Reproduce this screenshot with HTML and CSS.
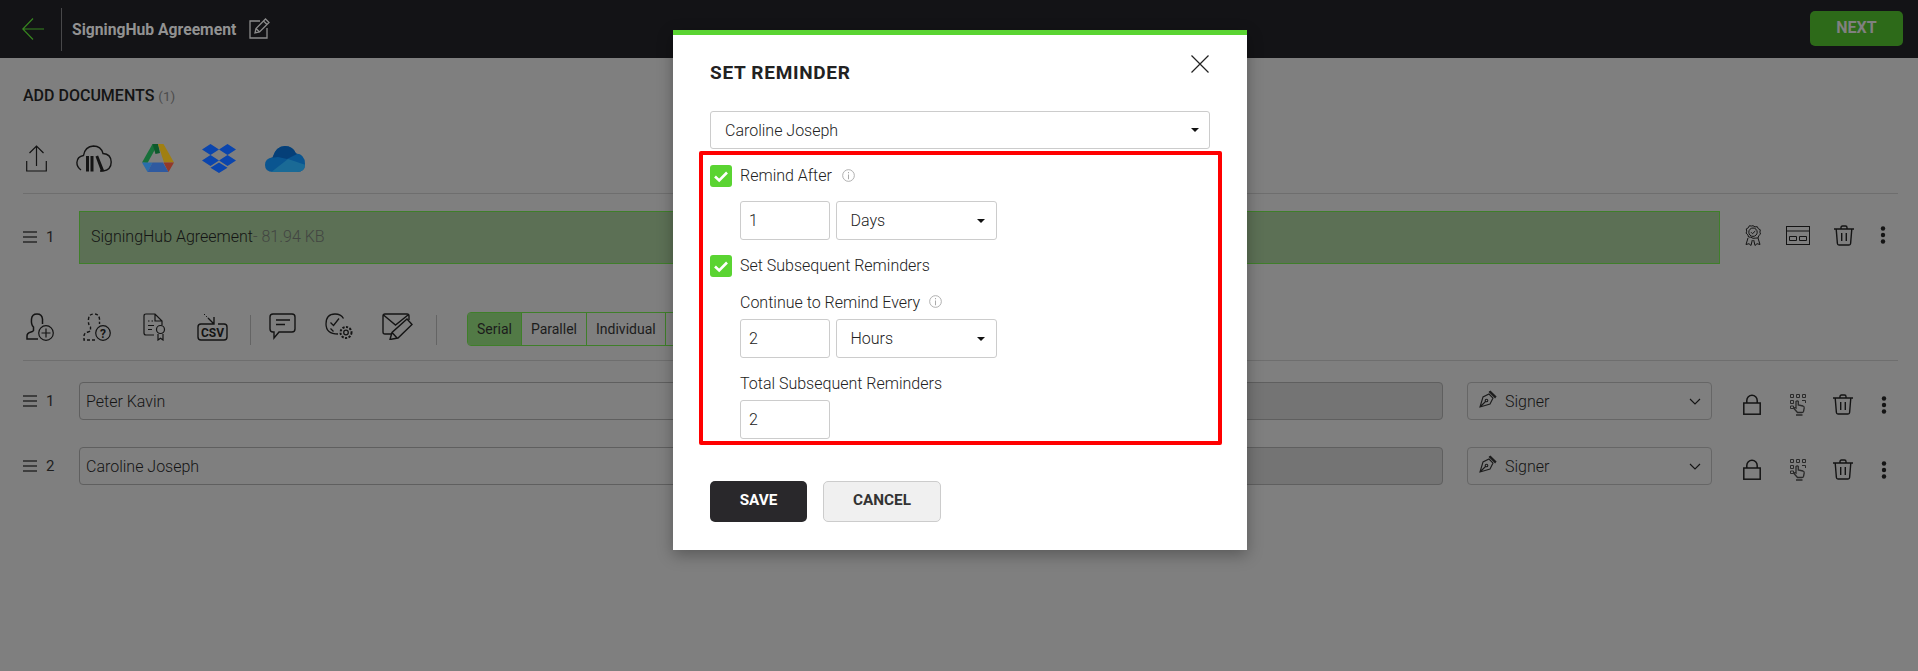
FILE: index.html
```html
<!DOCTYPE html>
<html lang="en">
<head>
  <meta charset="UTF-8">
  <title>Set Reminder</title>
  <link rel="stylesheet" href="styles.css">
</head>
<body>
  <svg class="defs" width="0" height="0">
    <symbol id="i-menu" viewBox="0 0 14 12"><path d="M0 1h14M0 6h14M0 11h14" fill="none" stroke="currentColor" stroke-width="1.3"/></symbol>
    <symbol id="i-trash" viewBox="0 0 20 21"><g fill="none" stroke="currentColor" stroke-width="1.4"><path d="M0 4h20M7 4V2.6Q7 1 8.5 1h3Q13 1 13 2.6V4M2.2 4l1.2 14.5Q3.5 20 5 20h10q1.500 0 1.600-1.500L17.800 4M7.700 8v8M12.300 8v8"/></g></symbol>
    <symbol id="i-dots" viewBox="0 0 8 18"><circle cx="4" cy="2.500" r="2.200" fill="currentColor"/><circle cx="4" cy="9" r="2.200" fill="currentColor"/><circle cx="4" cy="15.500" r="2.200" fill="currentColor"/></symbol>
    <symbol id="i-lock" viewBox="0 0 18 21"><g fill="none" stroke="currentColor" stroke-width="1.500"><rect x=".8" y="9" width="16.400" height="11.200"/><path d="M3.800 9V6.500a5.200 5.200 0 0 1 10.400 0V9"/></g></symbol>
    <symbol id="i-key" viewBox="0 0 16 22"><g fill="none" stroke="currentColor" stroke-width="1"><path d="M.5.500h3v3h-3zM6.500.500h3v3h-3zM12.500.500h3v3h-3zM.5 6.500h3v3h-3zM.5 12h3v2.500h-3zM12 6.500h3.500v2.500"/><path stroke-width="1.300" d="M6 14V7.500q1.300-1.300 2.300 0V11l4.700 1q1.500.5 1.200 2l-.7 3.500q-.3 1-1.500 1H7.500L4 14.500q.5-1.500 2-.5zM6 21h6.500"/></g></symbol>
    <symbol id="i-pen" viewBox="0 0 18 18"><g fill="none" stroke="currentColor" stroke-width="1.100"><path d="M1 17l3-10 6-3 4 4-3 6zM1 17l5.500-5.500M10 1.500l6.500 6.500M11 .8l6.200 6.200"/><circle cx="7.500" cy="10.500" r="1.300"/></g></symbol>
    <symbol id="i-info" viewBox="0 0 14 14"><circle cx="7" cy="7" r="6.300" fill="none" stroke="#aaa" stroke-width="1"/><path d="M7 6v5M7 3.200v1.300" stroke="#aaa" stroke-width="1.100"/></symbol>
    <symbol id="i-check" viewBox="0 0 22 22"><rect width="22" height="22" rx="3" fill="#5ad432"/><path d="M5 11.500l4.200 4L17 7.500" fill="none" stroke="#fff" stroke-width="2.600"/></symbol>
    <clipPath id="od-clip"><path d="M8 27Q0 27 0 20 0 13 7.500 12.500 11 1 20 1q8 0 11 7.500 9 .5 9 10.500 0 8-8 8z"/></clipPath>
  </svg>

  <!-- Top bar -->
  <header class="topbar">
    <svg class="back" width="22" height="22" viewBox="0 0 22 22"><path d="M22 11H1M11 .5L.8 11 11 21.500" fill="none" stroke="#37851f" stroke-width="1.200"/></svg>
    <span class="topbar-sep"></span>
    <span class="doc-title">SigningHub Agreement</span>
    <svg class="edit" width="21" height="21" viewBox="0 0 21 21"><g fill="none" stroke="#8c8c8c" stroke-width="1.300"><path d="M11 3H1v17h17V10"/><path d="M6 15l1-4.500L16.500 1l3.500 3.500L10.500 14zM7 10.500l3.500 3.500M14.500 3l3.500 3.500"/></g></svg>
    <button class="next-btn">NEXT</button>
  </header>

  <main class="page">
    <h2 class="section-title">ADD DOCUMENTS <span class="count">(1)</span></h2>

    <div class="sources">
      <svg class="src-upload" width="21" height="27" viewBox="0 0 21 27"><path d="M10.500 21V1M3.500 8l7-7 7 7M.7 16v10h19.600V16" fill="none" stroke="#141414" stroke-width="1.200"/></svg>
      <svg class="src-cloud" width="36" height="27" viewBox="0 0 36 27"><g fill="none" stroke="#141414" stroke-width="1.400"><path d="M5 25Q.8 22 .9 17.500 1.200 11.500 7.500 10.500 9 1.500 17.500 1q7.500 0 9.500 7.500 8 .5 8.200 8.500 0 8-8.200 9h-3"/></g><path d="M10 11h3v15.500h-3zM14.500 11h3v15.500h-3zM19.500 11.500l2.600-1 6 15-3 1z" fill="#141414"/></svg>
      <svg class="src-drive" width="32" height="28" viewBox="0 0 32 28">
        <path d="M10.500 0h5.500L5.500 19 0 18.500z" fill="#17703a"/>
        <path d="M10.500 0H16l2 9-4.500 1z" fill="#0d5a2c"/>
        <path d="M16 0h5.500L32 18.500h-10z" fill="#a07f12"/>
        <path d="M0 18.500h10.500L5.500 28z" fill="#2a6dab"/>
        <path d="M5.500 28l5-9.500H21L26.500 28z" fill="#2f5aa0"/>
        <path d="M21.500 18.500H32L26.500 28z" fill="#93392a"/>
      </svg>
      <svg class="src-dropbox" width="34" height="29" viewBox="0 0 34 29" fill="#0b45ad"><path d="M8.500 0L17 5.500 8.500 11 0 5.500zM25.500 0L34 5.500 25.500 11 17 5.500zM8.500 11L17 16.500 8.500 22 0 16.500zM25.500 11L34 16.500 25.500 22 17 16.500zM17 18.500l8.500 5.300L17 29l-8.500-5.200z"/></svg>
      <svg class="src-onedrive" width="40" height="27" viewBox="0 0 40 27">
        <g clip-path="url(#od-clip)">
          <rect width="40" height="27" fill="#0a5590"/>
          <path d="M5 13L12 0h20v9L22 14l-9-2z" fill="#053f78"/>
          <path d="M5 28l18-14 18 6v8z" fill="#1a6a96"/>
        </g>
      </svg>
    </div>

    <div class="row doc-row">
      <div class="handle"><svg class="menu"><use href="#i-menu"/></svg><span>1</span></div>
      <div class="doc-box">SigningHub Agreement<span class="doc-size">- 81.94 KB</span></div>
      <div class="actions doc-actions">
        <svg width="16" height="21" viewBox="0 0 16 21"><g fill="none" stroke="#141414" stroke-width="1"><path d="M8 .7l2 1.200 2.300-.2 1 2 2 1.100-.4 2.300.6 2-1.800 1.600-.6 2.200-2.300.2L8 13.300l-2.200-1.100-2.300-.2-.6-2.200L1.100 8.200l.6-2-.4-2.300 2-1.100 1-2 2.300.2z"/><circle cx="8" cy="7.200" r="4.200"/><path d="M6 7.200l1.500 1.500L10.300 6M3 13l-2 6.500 3-.8 2 1.800 1.300-5.500M13 13l2 6.500-3-.8-2 1.800-1.300-5.500"/></g></svg>
        <svg width="24" height="19" viewBox="0 0 24 19"><g fill="none" stroke="#141414" stroke-width="1"><rect x=".5" y=".5" width="23" height="18"/><path d="M.5 5h23"/><path d="M3.500 10.500h7v4h-7zM13.500 10.500h7v4h-7z"/></g></svg>
        <svg class="trash"><use href="#i-trash"/></svg>
        <svg class="dots"><use href="#i-dots"/></svg>
      </div>
    </div>

    <div class="toolbar">
      <svg class="t-add" width="28" height="28" viewBox="0 0 28 28"><g fill="none" stroke="#141414" stroke-width="1.500"><path d="M12 26H1v-3q0-3 4-4 2-.5 2.500-1.500V14Q5 12 5.500 6 6 1 11 1t5.500 5v5"/><circle cx="20" cy="20" r="7.300" stroke-width="1.200"/><path d="M20 15.500v9M15.500 20h9" stroke-width="1.200"/></g></svg>
      <svg class="t-ask" width="28" height="28" viewBox="0 0 28 28"><g fill="none" stroke="#141414" stroke-width="1.400"><path stroke-dasharray="3 2" d="M12 27H1v-4q0-3 4-4 2-.5 2.500-1.500V14Q5 12 5.500 6 6 1 11 1t5.500 5v5"/><circle cx="20" cy="20" r="7.300" stroke-width="1.200"/></g><text class="icon-text" x="20" y="24.500">?</text></svg>
      <svg class="t-doc" width="23" height="28" viewBox="0 0 23 28"><g fill="none" stroke="#141414" stroke-width="1.200"><path d="M11 22H3q-2 0-2-2V3q0-2 2-2h9l7 7v4M12 1v7h7"/><path d="M5 8h1.500M8.500 8H10M5 12.500h6M5 16.500h4" stroke-width="1.100"/><circle cx="17.500" cy="16.500" r="4"/><path d="M15 21v6l2.500-1.700L20 27v-6"/></g></svg>
      <svg class="t-csv" width="31" height="28" viewBox="0 0 31 28"><g fill="none" stroke="#141414" stroke-width="1.400"><path d="M10 11H4q-3 0-3 3v10q0 3 3 3h23q3 0 3-3V14q0-3-3-3h-6"/><path d="M7 1l4 4" stroke-dasharray="1.500 1.500" stroke-width="1"/><path d="M11 5l6 6M17 4v7h-7"/></g><text class="icon-text" x="15.500" y="24">CSV</text></svg>
      <span class="tool-sep sep-one"></span>
      <svg class="t-chat" width="27" height="27" viewBox="0 0 27 27"><g fill="none" stroke="#141414" stroke-width="1.400"><path d="M4 1h19q3 0 3 3v12q0 3-3 3H10l-5 6v-6H4q-3 0-3-3V4q0-3 3-3z"/><path d="M7 7h14M7 11.500h9"/></g></svg>
      <svg class="t-gear" width="28" height="27" viewBox="0 0 28 27"><g fill="none" stroke="#141414" stroke-width="1.300"><path d="M13 21Q1 21 1 11 1 1 10 1q6 0 8.500 4.500"/><path d="M5.500 9.500l3 3L14 5.500M5.500 15.500l3 3"/><circle cx="21" cy="19.500" r="2.300"/><circle cx="21" cy="19.500" r="5.500" stroke-dasharray="2.200 1.400" stroke-width="2"/></g></svg>
      <svg class="t-mail" width="33" height="27" viewBox="0 0 33 27"><g fill="none" stroke="#141414" stroke-width="1.400"><path d="M10 21H3q-2 0-2-2V3q0-2 2-2h22q2 0 2 2v4M1.500 2l12 10L26 2"/><path d="M8 26.500l2-7L25 6l5 5.500L16 25zM10 19.500l5.500 6"/></g></svg>
      <span class="tool-sep sep-two"></span>
      <div class="segments">
        <span class="seg seg-active">Serial</span>
        <span class="seg">Parallel</span>
        <span class="seg">Individual</span>
        <span class="seg">Custom</span>
      </div>
    </div>

    <div class="row person-row first">
      <div class="handle"><svg class="menu"><use href="#i-menu"/></svg><span>1</span></div>
      <div class="field name-field">Peter Kavin</div>
      <div class="field mail-field"></div>
      <div class="role"><svg class="pen"><use href="#i-pen"/></svg>Signer<svg class="chevron" width="12" height="7" viewBox="0 0 12 7"><path d="M1 1l5 5 5-5" fill="none" stroke="#141414" stroke-width="1.100"/></svg></div>
      <div class="actions person-actions">
        <svg class="lock"><use href="#i-lock"/></svg>
        <svg class="key"><use href="#i-key"/></svg>
        <svg class="trash"><use href="#i-trash"/></svg>
        <svg class="dots"><use href="#i-dots"/></svg>
      </div>
    </div>
    <div class="row person-row">
      <div class="handle"><svg class="menu"><use href="#i-menu"/></svg><span>2</span></div>
      <div class="field name-field">Caroline Joseph</div>
      <div class="field mail-field"></div>
      <div class="role"><svg class="pen"><use href="#i-pen"/></svg>Signer<svg class="chevron" width="12" height="7" viewBox="0 0 12 7"><path d="M1 1l5 5 5-5" fill="none" stroke="#141414" stroke-width="1.100"/></svg></div>
      <div class="actions person-actions">
        <svg class="lock"><use href="#i-lock"/></svg>
        <svg class="key"><use href="#i-key"/></svg>
        <svg class="trash"><use href="#i-trash"/></svg>
        <svg class="dots"><use href="#i-dots"/></svg>
      </div>
    </div>
  </main>

  <!-- Modal -->
  <div class="modal">
    <div class="modal-head">
      <h3>SET REMINDER</h3>
      <svg class="close" width="18" height="18" viewBox="0 0 18 18"><path d="M.5.500l17 17M17.500.500l-17 17" fill="none" stroke="#222" stroke-width="1.200"/></svg>
    </div>
    <div class="select wide-select">Caroline Joseph<span class="caret"></span></div>

    <div class="highlight">
      <div class="check-row">
        <svg class="check"><use href="#i-check"/></svg>
        <span>Remind After</span>
        <svg class="info"><use href="#i-info"/></svg>
      </div>
      <div class="indent">
        <div class="inputs first-inputs">
          <div class="num">1</div>
          <div class="select unit">Days<span class="caret"></span></div>
        </div>
      </div>
      <div class="check-row second">
        <svg class="check"><use href="#i-check"/></svg>
        <span>Set Subsequent Reminders</span>
      </div>
      <div class="indent">
        <div class="label">Continue to Remind Every <svg class="info"><use href="#i-info"/></svg></div>
        <div class="inputs">
          <div class="num">2</div>
          <div class="select unit">Hours<span class="caret"></span></div>
        </div>
        <div class="label">Total Subsequent Reminders</div>
        <div class="inputs">
          <div class="num">2</div>
        </div>
      </div>
    </div>

    <div class="modal-foot">
      <button class="save-btn">SAVE</button>
      <button class="cancel-btn">CANCEL</button>
    </div>
  </div>
</body>
</html>
```

FILE: styles.css
```css
/* General Reset */
* {
  margin: 0;
  padding: 0;
  box-sizing: border-box;
}
html, body {
  height: 671px;
  overflow: hidden;
}
body {
  position: relative;
  font-family: Roboto, "Liberation Sans", sans-serif;
  font-size: 16px;
  font-weight: 300;
  color: #141414;
  background-color: #7f7f7f;
}
.defs {
  position: absolute;
}
svg {
  display: block;
  flex: none;
}

/* Top bar */
.topbar {
  display: flex;
  align-items: center;
  height: 58px;
  padding: 0 15px 0 22px;
  background-color: #131316;
}
.topbar-sep {
  width: 1px;
  height: 43px;
  margin-left: 17px;
  background-color: #48484a;
}
.doc-title {
  margin-left: 10px;
  font-size: 15.700px;
  font-weight: 700;
  color: #929292;
}
.edit {
  margin-left: 13px;
  margin-top: -1px;
}
.next-btn {
  margin-left: auto;
  width: 93px;
  height: 35px;
  margin-top: -1px;
  padding-bottom: 2px;
  border: none;
  border-radius: 5px;
  background-color: #2d6a19;
  color: #808080;
  font: 700 16px Roboto, sans-serif;
}

/* Page */
.page {
  padding: 28px 20px 0 23px;
}
.section-title {
  font-size: 16px;
  font-weight: 500;
  line-height: 20px;
  color: #141414;
}
.count {
  font-weight: 400;
  font-size: 13.500px;
  color: #4c4c4c;
}
.sources {
  display: flex;
  align-items: flex-end;
  height: 51px;
  margin-top: 37px;
  padding: 0 0 20px 3px;
  border-bottom: 1px solid #6e6e6e;
}
.src-cloud { margin-left: 29px; margin-bottom: 1px; }
.src-drive { margin-left: 30px; margin-bottom: 1px; }
.src-dropbox { margin-left: 28px; }
.src-onedrive { margin-left: 29px; margin-bottom: 1px; }
.src-upload { margin-bottom: 1px; }

.row {
  display: flex;
  align-items: center;
}
.handle {
  display: flex;
  align-items: center;
  gap: 9px;
  flex: none;
  width: 56px;
  font-size: 15px;
  font-weight: 400;
  color: #1e1e1e;
}
.menu {
  width: 14px;
  height: 12px;
  color: #2a2a2a;
}

.doc-row {
  height: 53px;
  margin-top: 17px;
}
.doc-row .handle {
  margin-top: -2px;
}
.doc-box {
  display: flex;
  align-items: center;
  width: 1641px;
  height: 53px;
  padding: 0 0 3px 11px;
  background-color: #5c7055;
  border: 1px solid #3f7f2a;
  color: #141414;
}
.doc-size {
  color: #424542;
}
.actions {
  display: flex;
  align-items: center;
}
.doc-actions {
  gap: 25px;
  padding-left: 25px;
  margin-top: -5px;
}
.trash {
  width: 20px;
  height: 21px;
  color: #141414;
}
.dots {
  width: 8px;
  height: 18px;
  color: #141414;
}
.doc-actions .trash {
  margin-left: -1px;
}

/* Toolbar */
.toolbar {
  display: flex;
  align-items: flex-start;
  height: 49px;
  margin-top: 48px;
  padding-left: 3px;
  border-bottom: 1px solid #6e6e6e;
}
.toolbar > svg {
  margin-top: 1px;
}
.t-add { margin-right: 29px; }
.t-ask { margin-right: 32px; }
.t-doc { margin-right: 31px; }
.t-csv { margin-right: 22px; }
.t-chat { margin-right: 29px; }
.t-gear { margin-right: 29px; }
.t-mail { margin-right: 21px; }
.tool-sep {
  width: 1px;
  height: 30px;
  margin-top: 3px;
  background-color: #646464;
}
.sep-one { margin-right: 18px; }
.sep-two { margin-right: 30px; }
.segments {
  display: flex;
  height: 34px;
  border: 1px solid #3f7f2a;
  border-radius: 4px;
  font-size: 14px;
  font-weight: 400;
  color: #1c1c1c;
}
.seg {
  display: flex;
  align-items: center;
  justify-content: center;
  padding: 0 9px;
  border-right: 1px solid #3f7f2a;
}
.seg:last-child {
  border-right: none;
}
.seg-active {
  background-color: #527a46;
}

/* Recipients */
.person-row {
  height: 38px;
  margin-top: 27px;
}
.person-row.first {
  margin-top: 21px;
}
.field {
  height: 38px;
  display: flex;
  align-items: center;
  padding: 1px 6px 0;
  border: 1px solid #5f5f5f;
  border-radius: 4px;
  color: #141414;
}
.name-field {
  width: 881px;
}
.mail-field {
  width: 473px;
  margin-left: 10px;
  background-color: #747474;
}
.role {
  display: flex;
  align-items: center;
  width: 245px;
  height: 38px;
  margin-left: 24px;
  padding: 1px 10px 0 11px;
  border: 1px solid #666;
  border-radius: 4px;
  color: #141414;
}
.pen {
  width: 18px;
  height: 18px;
  margin: -5px 8px 0 0;
  color: #1c1c1c;
}
.chevron {
  margin-left: auto;
}
.person-actions {
  padding-left: 31px;
  margin-top: 7px;
}
.lock {
  width: 18px;
  height: 21px;
  color: #141414;
}
.key {
  width: 16px;
  height: 22px;
  margin-left: 29px;
  color: #2a2a2a;
}
.person-actions .trash {
  margin-left: 27px;
}
.person-actions .dots {
  margin-left: 27px;
}

/* Modal */
.modal {
  position: absolute;
  left: 673px;
  top: 30px;
  width: 574px;
  padding: 0 37px 28px;
  font-weight: 300;
  background-color: #fff;
  border-top: 5px solid #5ad432;
  box-shadow: 0 5px 15px rgba(0, 0, 0, 0.3);
}
.modal-head {
  display: flex;
  justify-content: space-between;
  align-items: flex-start;
  padding-top: 20px;
  padding-right: 1px;
}
.modal-head h3 {
  margin-top: 8px;
  font-size: 19px;
  font-weight: 700;
  letter-spacing: 0.7px;
  line-height: 20px;
  color: #222;
}
.select {
  position: relative;
  display: flex;
  align-items: center;
  background-color: #fff;
  border: 1px solid #ccc;
  border-radius: 3px;
  color: #222;
}
.wide-select {
  width: 500px;
  height: 38px;
  margin-top: 28px;
  padding-left: 14px;
}
.wide-select .caret {
  right: 10px;
}
.caret {
  position: absolute;
  right: 11px;
  top: 50%;
  margin-top: -2px;
  border-top: 4px solid #111;
  border-left: 4px solid transparent;
  border-right: 4px solid transparent;
}
.highlight {
  margin: 2px -12px 0 -11px;
  padding: 10px 0 2px 7px;
  border: 4px solid #f00;
  border-radius: 2px;
}
.check-row {
  display: flex;
  align-items: center;
  height: 22px;
  color: #222;
}
.check-row span {
  margin-top: -2px;
}
.check-row.second {
  margin-top: 15px;
}
.check {
  width: 22px;
  height: 22px;
  margin-right: 8px;
}
.info {
  width: 13px;
  height: 13px;
  margin-left: 10px;
  margin-top: -2px;
}
.label .info {
  margin-left: 9px;
}
.indent {
  margin-left: 30px;
}
.label {
  display: flex;
  align-items: center;
  height: 20px;
  margin-top: 15px;
  color: #222;
}
.inputs {
  display: flex;
  gap: 5.500px;
  margin-top: 7px;
}
.first-inputs {
  margin-top: 14px;
}
.num {
  display: flex;
  align-items: center;
  width: 90px;
  height: 39px;
  padding-left: 8px;
  border: 1px solid #ccc;
  border-radius: 3px;
  font-weight: 300;
  color: #222;
}
.unit {
  width: 161.500px;
  height: 39px;
  padding-left: 14px;
}
.modal-foot {
  display: flex;
  gap: 16px;
  margin-top: 36px;
}
.modal-foot button {
  height: 41px;
  padding-bottom: 3px;
  border-radius: 5px;
  font: 700 15.300px Roboto, sans-serif;
}
.save-btn {
  width: 97px;
  border: none;
  background-color: #29282b;
  color: #fff;
}
.cancel-btn {
  width: 118px;
  border: 1px solid #ccc;
  background-color: #f0f0f0;
  color: #333;
}
.icon-text {
  font: 700 12px Roboto, sans-serif;
  fill: #141414;
  text-anchor: middle;
}
```
